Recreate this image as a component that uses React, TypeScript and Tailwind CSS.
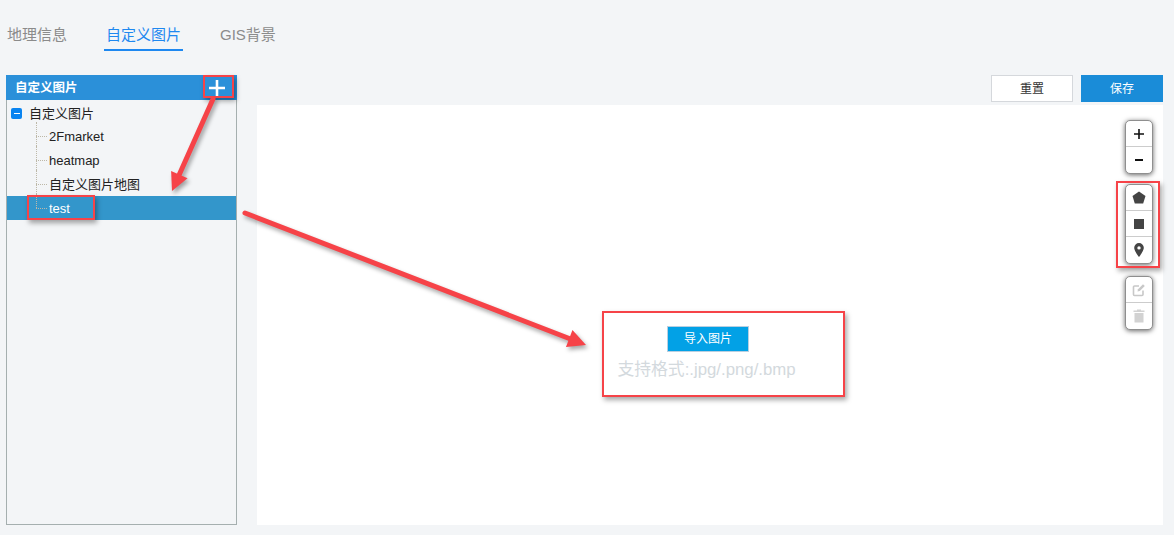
import React from "react";

const font = { fontFamily: '"Liberation Sans","Noto Sans CJK SC",sans-serif' };

function RedBox({ cls }: { cls: string }) {
  return <div className={`absolute border-2 border-[#f64348] shadow-[2px_3px_5px_rgba(0,0,0,0.35)] ${cls}`} />;
}

function TreeRow({ label, selected, last }: { label: string; selected?: boolean; last?: boolean }) {
  return (
    <div className={`relative flex h-6 items-center pl-[42px] pt-[1px] text-[13px] ${selected ? "bg-[#3396cb] text-white" : "text-[#222]"}`}>
      <span className={`absolute left-[29px] top-[-2px] w-0 border-l border-dotted border-[#bdb8a8] ${last ? "h-[14px]" : "h-[26px]"}`} />
      <span className="absolute left-[29px] top-[12px] w-[11px] border-t border-dotted border-[#bdb8a8]" />
      {label}
    </div>
  );
}

function ToolGroup({ children, cls }: { children: React.ReactNode; cls?: string }) {
  return (
    <div className={`flex w-[28px] flex-col divide-y divide-[#ccc] rounded-[5px] border border-[#8f8f8f] bg-white shadow-[0_1px_5px_rgba(0,0,0,0.6)] ${cls ?? ""}`}>
      {children}
    </div>
  );
}

function ToolBtn({ children }: { children: React.ReactNode }) {
  return <div className="flex h-[26px] items-center justify-center">{children}</div>;
}

function Arrow({ x1, y1, x2, y2 }: { x1: number; y1: number; x2: number; y2: number }) {
  const a = Math.atan2(y2 - y1, x2 - x1);
  const L = 18;
  const W = 9;
  const bx = x2 - L * Math.cos(a);
  const by = y2 - L * Math.sin(a);
  const nx = -Math.sin(a);
  const ny = Math.cos(a);
  const pts = `${x2},${y2} ${bx + nx * W},${by + ny * W} ${bx - nx * W},${by - ny * W}`;
  return (
    <g fill="#f64348" stroke="#f64348" style={{ filter: "drop-shadow(2px 3px 2px rgba(0,0,0,0.35))" }}>
      <line x1={x1} y1={y1} x2={bx} y2={by} strokeWidth={5} strokeLinecap="round" />
      <polygon points={pts} strokeWidth={0} />
    </g>
  );
}

export default function App() {
  return (
    <div className="relative h-[535px] w-[1174px] overflow-hidden bg-[#f3f5f7]" style={font}>
      <div className="flex h-[75px] items-start gap-[39px] pl-[7px] pt-[25px] text-[15px] text-[#8b8b8b]">
        <span className="h-[26px] leading-[19px]">地理信息</span>
        <span className="-mx-[2px] h-[26px] border-b-2 border-[#1e88f0] px-[2px] leading-[19px] text-[#1e88f0]">自定义图片</span>
        <span className="h-[26px] leading-[19px]">GIS背景</span>
      </div>

      <div className="flex h-[450px] pl-[6px] pr-[11px]">
        <div className="flex w-[231px] flex-col border border-t-0 border-[#a5afaf]">
          <div className="-mx-px flex h-[25px] items-center justify-between bg-[#2b90d9] pl-[9px] pr-[11px] text-[12.5px] font-bold text-white">
            <span className="pt-[1px]">自定义图片</span>
            <svg width="18" height="18" viewBox="0 0 18 18" aria-hidden="true">
              <path d="M9 1v16M1 9h16" stroke="#fff" strokeWidth="2.6" />
            </svg>
          </div>
          <div className="flex h-6 items-center gap-[7px] pl-[4px] pt-[3px] text-[13px] text-[#222]">
            <span className="flex h-[11px] w-[11px] items-center justify-center rounded-[2px] bg-[#0a84f0]">
              <span className="h-px w-[6px] bg-white" />
            </span>
            <span>自定义图片</span>
          </div>
          <TreeRow label="2Fmarket" />
          <TreeRow label="heatmap" />
          <TreeRow label="自定义图片地图" />
          <TreeRow label="test" selected last />
        </div>

        <div className="ml-[20px] flex flex-1 flex-col">
          <div className="flex h-[30px] items-start justify-end gap-2">
            <button className="h-[27px] w-[82px] border border-[#d5d8dc] bg-white text-xs text-[#333]">重置</button>
            <button className="h-[27px] w-[82px] bg-[#1a8cd8] text-xs text-white">保存</button>
          </div>
          <div className="relative flex flex-1 flex-col items-center bg-white">
            <div className="flex w-[227px] flex-col items-center pt-[221px]">
              <button className="mr-[4px] h-[26px] w-[82px] border border-[#b9cfe0] bg-[#02a1e6] text-xs text-white">导入图片</button>
              <div className="mt-[7px] self-start whitespace-nowrap pl-[21px] text-[16.8px] leading-[22px] text-[#d3d9dd]">支持格式:.jpg/.png/.bmp</div>
            </div>
            <div className="absolute right-[10px] top-[15px] flex flex-col gap-[10px]">
              <ToolGroup>
                <ToolBtn>
                  <svg width="12" height="12" viewBox="0 0 12 12" aria-hidden="true"><path d="M6 1v10M1 6h10" stroke="#111" strokeWidth="1.6" /></svg>
                </ToolBtn>
                <ToolBtn>
                  <svg width="10" height="4" viewBox="0 0 10 4" aria-hidden="true"><path d="M1 2h8" stroke="#111" strokeWidth="2" /></svg>
                </ToolBtn>
              </ToolGroup>
              <ToolGroup>
                <ToolBtn>
                  <svg width="14" height="13" viewBox="0 0 14 13" aria-hidden="true"><path d="M7 0.5 13.5 5l-2.300 7.500H2.800L0.500 5z" fill="#444" /></svg>
                </ToolBtn>
                <ToolBtn>
                  <span className="h-[10px] w-[10px] bg-[#444]" />
                </ToolBtn>
                <ToolBtn>
                  <svg width="10" height="14" viewBox="0 0 10 14" aria-hidden="true"><path fillRule="evenodd" d="M5 0a4.800 4.800 0 0 1 4.800 4.800C9.800 8 5 14 5 14S.2 8 .2 4.800A4.800 4.800 0 0 1 5 0zm0 3.200a1.700 1.700 0 1 0 0 3.400 1.700 1.700 0 0 0 0-3.400z" fill="#444" /></svg>
                </ToolBtn>
              </ToolGroup>
              <ToolGroup cls="mt-[2px]">
                <ToolBtn>
                  <svg width="14" height="14" viewBox="0 0 14 14" fill="none" aria-hidden="true"><path d="M11 7.500V11.500a1 1 0 0 1-1 1H2.500a1 1 0 0 1-1-1V4a1 1 0 0 1 1-1H7" stroke="#c8c8c8" strokeWidth="1.600" /><path d="M5.500 8.500 6 6.200 11 1.200 12.800 3 7.800 8z" fill="#c8c8c8" /></svg>
                </ToolBtn>
                <ToolBtn>
                  <svg width="12" height="14" viewBox="0 0 12 14" aria-hidden="true"><path d="M4 .5h4v1h3.500v1.500H.5V1.500H4zM1.500 4h9v9.500h-9z" fill="#d2d2d2" /></svg>
                </ToolBtn>
              </ToolGroup>
            </div>
          </div>
        </div>
      </div>

      <RedBox cls="left-[203px] top-[75px] h-[23px] w-[31px]" />
      <RedBox cls="left-[27px] top-[195px] h-[25px] w-[68px]" />
      <RedBox cls="left-[1116px] top-[181px] h-[87px] w-[44px]" />
      <RedBox cls="left-[602px] top-[311px] h-[86px] w-[243px]" />

      <svg className="pointer-events-none absolute left-0 top-0" width="1174" height="535" aria-hidden="true">
        <Arrow x1={213} y1={99} x2={172} y2={191} />
        <Arrow x1={245} y1={213} x2={586} y2={345} />
      </svg>
    </div>
  );
}
